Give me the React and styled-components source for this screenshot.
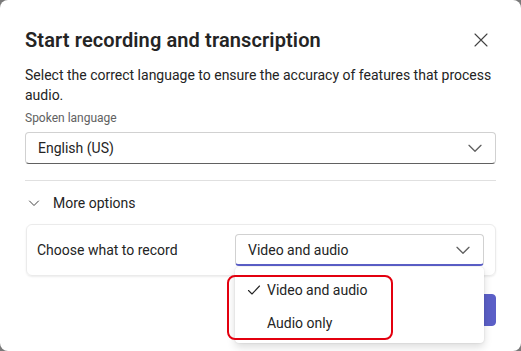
import React from "react";
import styled, { createGlobalStyle } from "styled-components";

const Global = createGlobalStyle`
  html, body { margin: 0; padding: 0; background: #7a7a7a; }
  body { font-family: "Segoe UI", Roboto, "Noto Sans", sans-serif; color: #242424; }
  * { box-sizing: border-box; }
`;

const Dialog = styled.div`
  position: relative;
  width: 521px;
  height: 351px;
  background: #ffffff;
  border-radius: 8px;
  overflow: hidden;
  padding: 26px 25px 0 25px;
  display: flex;
  flex-direction: column;
`;

const Header = styled.div`
  display: flex;
  align-items: center;
  justify-content: space-between;
  height: 28px;
`;

const Title = styled.h1`
  margin: 0;
  font-size: 20px;
  font-weight: 600;
  line-height: 28px;
  letter-spacing: 0.12px;
`;

const CloseButton = styled.button`
  border: none;
  background: transparent;
  padding: 0;
  width: 20px;
  height: 20px;
  margin-right: 5px;
  display: flex;
  align-items: center;
  justify-content: center;
  color: #424242;
`;

const Description = styled.p`
  margin: 11px 0 0 0;
  font-size: 14px;
  line-height: 20px;
`;

const FieldLabel = styled.div`
  margin-top: 5px;
  font-size: 12px;
  line-height: 16px;
  color: #616161;
`;

const Select = styled.div`
  position: relative;
  height: 32px;
  width: ${(p) => p.$width || "100%"};
  margin-top: ${(p) => p.$mt || "0px"};
  border: 1px solid #d1d1d1;
  border-bottom: ${(p) => (p.$focused ? "2px solid #5b5fc7" : "1px solid #616161")};
  border-radius: 4px;
  display: flex;
  align-items: center;
  justify-content: space-between;
  padding: 0 12px 0 12px;
  font-size: 14px;
  background: #fff;
`;

const Divider = styled.div`
  margin-top: 16px;
  height: 1px;
  background: #e0e0e0;
`;

const Expander = styled.div`
  display: flex;
  align-items: center;
  gap: 13px;
  height: 20px;
  margin-top: 12px;
  padding-left: 3px;
  font-size: 14px;
`;

const Card = styled.div`
  margin-top: 11px;
  margin-left: 1px;
  height: 52px;
  border: 1px solid #ebebeb;
  border-radius: 6px;
  box-shadow: 0 1px 2px rgba(0, 0, 0, 0.08);
  display: flex;
  align-items: center;
  justify-content: space-between;
  padding: 0 11px 0 10px;
  font-size: 14px;
`;

const SelectWrap = styled.div`
  position: relative;
`;

const Listbox = styled.div`
  position: absolute;
  top: 33px;
  left: 0;
  width: 249px;
  background: #fff;
  border-radius: 4px;
  box-shadow: 0 0 2px rgba(0, 0, 0, 0.12), 0 4px 8px rgba(0, 0, 0, 0.14);
  padding: 6px 0 4px 0;
  z-index: 5;
`;

const Option = styled.div`
  height: 33px;
  display: flex;
  align-items: center;
  padding-left: 12px;
  gap: 6px;
  font-size: 14px;
`;

const CheckSlot = styled.span`
  width: 14px;
  height: 14px;
  display: flex;
  align-items: center;
`;

const Highlight = styled.div`
  position: absolute;
  left: -8px;
  top: 41px;
  width: 166px;
  height: 65px;
  border: 2px solid #e3000f;
  border-radius: 8px;
  z-index: 6;
  pointer-events: none;
`;

const Footer = styled.div`
  margin-top: 18px;
  display: flex;
  justify-content: flex-end;
  gap: 8px;
`;

const Button = styled.button`
  height: 32px;
  min-width: 80px;
  border-radius: 4px;
  font-family: inherit;
  font-size: 14px;
  font-weight: 600;
  border: 1px solid ${(p) => (p.$primary ? "#5b5fc7" : "#d1d1d1")};
  background: ${(p) => (p.$primary ? "#5b5fc7" : "#fff")};
  color: ${(p) => (p.$primary ? "#fff" : "#242424")};
`;

const Chevron = ({ size = 12, color = "#616161" }) => (
  <svg width={size} height={size} viewBox="0 0 12 12" fill="none">
    <path d="M1.5 4 L6 8.5 L10.5 4" stroke={color} strokeWidth="1" strokeLinecap="round" strokeLinejoin="round" />
  </svg>
);

export default function App() {
  return (
    <>
      <Global />
      <Dialog>
        <Header>
          <Title>Start recording and transcription</Title>
          <CloseButton aria-label="Close">
            <svg width="14" height="14" viewBox="0 0 14 14" fill="none">
              <path d="M1 1 L13 13 M13 1 L1 13" stroke="#424242" strokeWidth="1.1" strokeLinecap="round" />
            </svg>
          </CloseButton>
        </Header>
        <Description>
          Select the correct language to ensure the accuracy of features that process audio.
        </Description>
        <FieldLabel>Spoken language</FieldLabel>
        <Select $mt="6px">
          <span>English (US)</span>
          <Chevron size={16} />
        </Select>
        <Divider />
        <Expander>
          <Chevron size={12} color="#424242" />
          <span>More options</span>
        </Expander>
        <Card>
          <span>Choose what to record</span>
          <SelectWrap>
            <Select $width="249px" $focused>
              <span>Video and audio</span>
              <Chevron size={16} />
            </Select>
            <Listbox>
              <Option>
                <CheckSlot>
                  <svg width="14" height="14" viewBox="0 0 14 14" fill="none">
                    <path d="M1.5 7.5 L5 11 L12.5 3" stroke="#242424" strokeWidth="1.1" strokeLinecap="round" strokeLinejoin="round" />
                  </svg>
                </CheckSlot>
                <span>Video and audio</span>
              </Option>
              <Option>
                <CheckSlot />
                <span>Audio only</span>
              </Option>
            </Listbox>
            <Highlight />
          </SelectWrap>
        </Card>
        <Footer>
          <Button>Cancel</Button>
          <Button $primary>Start</Button>
        </Footer>
      </Dialog>
    </>
  );
}
